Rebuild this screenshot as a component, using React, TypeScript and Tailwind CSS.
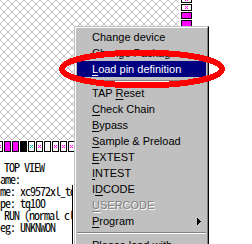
import type { ReactNode } from 'react'

type PinKind = 'm' | 'b' | 'x' | 'c' | 'w'

const BOTTOM_PINS: PinKind[] = ['x', 'm', 'm', 'b', 'c', 'x', 'w', 'x', 'x', 'x']
const SIDE_PINS: PinKind[] = ['x', 'x', 'm', 'm']

type Item =
  | { sep: true }
  | {
      sep?: false
      label: string
      key?: number
      active?: boolean
      disabled?: boolean
      submenu?: boolean
    }

const ITEMS: Item[] = [
  { label: 'Change device' },
  { label: 'Change Package' },
  { label: 'Load pin definition', key: 0, active: true },
  { sep: true },
  { label: 'TAP Reset', key: 4 },
  { label: 'Check Chain', key: 0 },
  { label: 'Bypass', key: 0 },
  { label: 'Sample & Preload', key: 0 },
  { label: 'EXTEST', key: 0 },
  { label: 'INTEST', key: 0 },
  { label: 'IDCODE', key: 1 },
  { label: 'USERCODE', key: 0, disabled: true },
  { label: 'Program', key: 0, submenu: true },
  { sep: true },
  { label: 'Please load with' },
]

function Pin({ kind, w, h }: { kind: PinKind; w: number; h: number }) {
  const iw = w - 2
  const ih = h - 2
  const cx = Math.floor(iw / 2)
  const cy = Math.floor(ih / 2)
  const mark = kind === 'c' ? '#00c8c8' : '#ff00ff'
  const fill = kind === 'm' ? 'bg-[#ff00ff]' : kind === 'b' ? 'bg-black' : 'bg-white'
  return (
    <div className={`shrink-0 border border-black ${fill}`} style={{ width: w, height: h }}>
      {(kind === 'x' || kind === 'c') && (
        <svg width={iw} height={ih} shapeRendering="crispEdges" className="block">
          {[
            [cx - 1, cy - 1],
            [cx + 1, cy - 1],
            [cx, cy],
            [cx - 1, cy + 1],
            [cx + 1, cy + 1],
          ].map(([x, y], i) => (
            <rect key={i} x={x} y={y} width={1} height={1} fill={mark} />
          ))}
        </svg>
      )}
    </div>
  )
}

function Hatch() {
  const cells: ReactNode[] = []
  for (let i = 0; i < 8; i++) {
    cells.push(<rect key={`a${i}`} x={i} y={i} width={1} height={1} fill="#c0c0c0" />)
    if (7 - i !== i) cells.push(<rect key={`b${i}`} x={7 - i} y={i} width={1} height={1} fill="#c0c0c0" />)
  }
  return (
    <svg width="100%" height="100%" shapeRendering="crispEdges" className="block">
      <defs>
        <pattern id="hatch" width="8" height="8" patternUnits="userSpaceOnUse">
          {cells}
        </pattern>
      </defs>
      <rect width="100%" height="100%" fill="url(#hatch)" />
    </svg>
  )
}

function Label({ text, k }: { text: string; k?: number }) {
  if (k === undefined) return <>{text}</>
  return (
    <>
      {text.slice(0, k)}
      <span className="underline decoration-1 underline-offset-[2px]">{text[k]}</span>
      {text.slice(k + 1)}
    </>
  )
}

function Menu() {
  return (
    <div className="absolute left-[74px] top-[26px] w-[135px] border-t border-l border-[#c0c0c0] border-r border-r-black bg-[#c0c0c0]">
      <div className="border-t border-l border-white border-r border-r-[#808080] p-px">
        {ITEMS.map((item, i) =>
          item.sep ? (
            <div key={i} className="h-[8px] pt-[3px]">
              <div className="h-px bg-[#808080]" />
              <div className="h-px bg-white" />
            </div>
          ) : (
            <div
              key={i}
              className={`flex h-[16px] items-center pl-[15px] pr-[4px] text-[11px] leading-[16px] whitespace-nowrap ${
                item.active ? 'bg-[#000080] text-white' : item.disabled ? 'text-[#808080] [text-shadow:1px_1px_0_#ffffff]' : 'text-black'
              }`}
            >
              <span className="flex-1">
                <Label text={item.label} k={item.key} />
              </span>
              {item.submenu && (
                <svg width="4" height="7" shapeRendering="crispEdges" className="mr-[1px]">
                  <path d="M0 0 L4 3.5 L0 7 Z" fill="#000" />
                </svg>
              )}
            </div>
          )
        )}
      </div>
    </div>
  )
}

export default function App() {
  return (
    <div className="relative h-[244px] w-[252px] overflow-hidden bg-white font-['Liberation_Sans',sans-serif]">
      {/* hatched canvas + right side pins */}
      <div className="flex h-[140px]">
        <div className="h-full w-[179px]">
          <Hatch />
        </div>
        <div className="ml-[2px] -mt-[4px] flex flex-col gap-px">
          {SIDE_PINS.map((k, i) => (
            <Pin key={i} kind={k} w={11} h={7} />
          ))}
        </div>
      </div>

      {/* bottom pin row */}
      <div className="-ml-[4px] mt-px flex gap-px">
        {BOTTOM_PINS.map((k, i) => (
          <Pin key={i} kind={k} w={7} h={11} />
        ))}
      </div>

      {/* chip info */}
      <div className="mt-[9px] font-['Noto_Sans_Mono_CJK_JP','Liberation_Mono',monospace] text-[12px] leading-[12px] tracking-[-1px] text-black whitespace-nowrap">
        <div className="pl-[4px]">TOP VIEW</div>
        <div>ame:</div>
        <div className="h-[80px] w-[73px] overflow-hidden border-r border-black">
          <div>me: xc9572xl_tq100</div>
          <div>pe: tq100</div>
          <div className="pl-[4px]">RUN (normal clock)</div>
          <div>eg: UNKNWON</div>
        </div>
      </div>

      <Menu />

      <svg className="pointer-events-none absolute inset-0" width="252" height="244" shapeRendering="crispEdges">
        <ellipse cx="142" cy="69" rx="80" ry="16.5" fill="none" stroke="#ff0000" strokeWidth="6" />
      </svg>
    </div>
  )
}
